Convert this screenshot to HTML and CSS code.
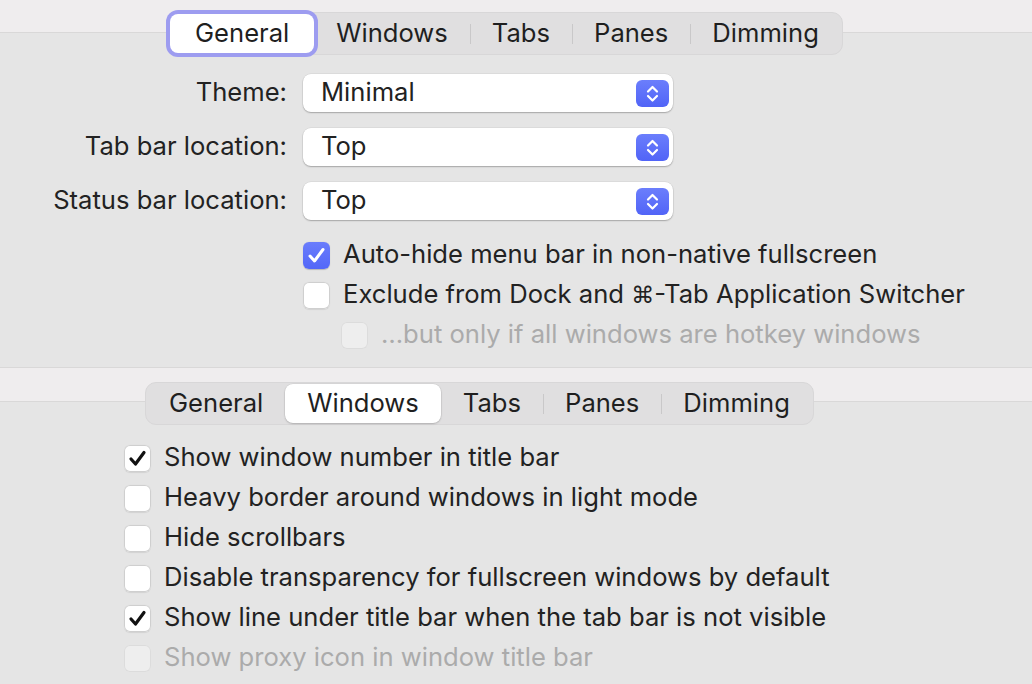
FILE: index.html
```html
<!DOCTYPE html>
<html>
<head>
<meta charset="utf-8">
<link rel="stylesheet" href="styles.css">
</head>
<body>
<div class="page">
  <section class="panel">
    <div class="band"></div>
    <div class="seg seg-top">
      <div class="seg-item selected focus">General</div>
      <div class="seg-item">Windows</div>
      <div class="seg-item sep">Tabs</div>
      <div class="seg-item sep">Panes</div>
      <div class="seg-item sep">Dimming</div>
    </div>
    <div class="form">
      <div class="label">Theme:</div>
      <div class="popup"><span class="val">Minimal</span><svg class="stepper" width="33" height="27" viewBox="0 0 33 27"><defs><linearGradient id="g1" x1="0" y1="0" x2="0" y2="1"><stop offset="0" stop-color="#6b7efc"/><stop offset="1" stop-color="#5164f7"/></linearGradient></defs><rect width="33" height="27" rx="6" fill="url(#g1)"/><path d="M12 11.5 L16.5 7 L21 11.5 M12 16 L16.5 20.5 L21 16" fill="none" stroke="#fff" stroke-width="2.2" stroke-linecap="round" stroke-linejoin="round"/></svg></div>
      <div class="label">Tab bar location:</div>
      <div class="popup"><span class="val">Top</span><svg class="stepper" width="33" height="27" viewBox="0 0 33 27"><rect width="33" height="27" rx="6" fill="url(#g1)"/><path d="M12 11.5 L16.5 7 L21 11.5 M12 16 L16.5 20.5 L21 16" fill="none" stroke="#fff" stroke-width="2.2" stroke-linecap="round" stroke-linejoin="round"/></svg></div>
      <div class="label">Status bar location:</div>
      <div class="popup"><span class="val">Top</span><svg class="stepper" width="33" height="27" viewBox="0 0 33 27"><rect width="33" height="27" rx="6" fill="url(#g1)"/><path d="M12 11.5 L16.5 7 L21 11.5 M12 16 L16.5 20.5 L21 16" fill="none" stroke="#fff" stroke-width="2.2" stroke-linecap="round" stroke-linejoin="round"/></svg></div>
    </div>
    <div class="checks checks-top">
      <div class="check-row">
        <span class="box box-blue"><svg width="27" height="27" viewBox="0 0 27 27"><path d="M7 14 L11.5 19 L20 7.5" fill="none" stroke="#fff" stroke-width="3" stroke-linecap="round" stroke-linejoin="round"/></svg></span>
        <span class="txt">Auto-hide menu bar in non-native fullscreen</span>
      </div>
      <div class="check-row">
        <span class="box"></span>
        <span class="txt">Exclude from Dock and <span class="cmd">⌘</span>-Tab Application Switcher</span>
      </div>
      <div class="check-row indent disabled">
        <span class="box"></span>
        <span class="txt">…but only if all windows are hotkey windows</span>
      </div>
    </div>
  </section>

  <section class="panel">
    <div class="band band2"></div>
    <div class="seg seg-bottom">
      <div class="seg-item">General</div>
      <div class="seg-item selected">Windows</div>
      <div class="seg-item">Tabs</div>
      <div class="seg-item sep">Panes</div>
      <div class="seg-item sep">Dimming</div>
    </div>
    <div class="checks checks-bottom">
      <div class="check-row">
        <span class="box"><svg width="27" height="27" viewBox="0 0 27 27"><path d="M7 14 L11.5 19 L20 7.5" fill="none" stroke="#111" stroke-width="3.2" stroke-linecap="round" stroke-linejoin="round"/></svg></span>
        <span class="txt">Show window number in title bar</span>
      </div>
      <div class="check-row">
        <span class="box"></span>
        <span class="txt">Heavy border around windows in light mode</span>
      </div>
      <div class="check-row">
        <span class="box"></span>
        <span class="txt">Hide scrollbars</span>
      </div>
      <div class="check-row">
        <span class="box"></span>
        <span class="txt">Disable transparency for fullscreen windows by default</span>
      </div>
      <div class="check-row">
        <span class="box"><svg width="27" height="27" viewBox="0 0 27 27"><path d="M7 14 L11.5 19 L20 7.5" fill="none" stroke="#111" stroke-width="3.2" stroke-linecap="round" stroke-linejoin="round"/></svg></span>
        <span class="txt">Show line under title bar when the tab bar is not visible</span>
      </div>
      <div class="check-row disabled">
        <span class="box"></span>
        <span class="txt">Show proxy icon in window title bar</span>
      </div>
    </div>
  </section>
</div>
</body>
</html>
```

FILE: styles.css
```css
* { box-sizing: border-box; }
html, body {
  margin: 0;
  padding: 0;
}
body {
  width: 1032px;
  height: 684px;
  overflow: hidden;
  background: #e5e5e5;
  font-family: Inter, "Liberation Sans", "DejaVu Sans", sans-serif;
  font-size: 25.6px;
  color: #222;
}
.page {
  display: flex;
  flex-direction: column;
}
.panel {
  display: flex;
  flex-direction: column;
}
.band {
  height: 33px;
  background: #efedee;
  border-bottom: 1px solid #d9d8d8;
}
.band2 {
  height: 35px;
  border-top: 1px solid #d9d8d8;
}
.seg {
  display: inline-flex;
  align-self: flex-start;
  padding: 1px;
  background: #e0dfe0;
  border: 1px solid #d8d7d8;
  border-radius: 11px;
  height: 43px;
}
.seg-top {
  margin: -21px 0 0 168px;
}
.seg-bottom {
  margin: -20px 0 0 145px;
}
.seg-item {
  position: relative;
  height: 39px;
  display: flex;
  align-items: center;
  padding: 0 22px 2px;
  border-radius: 8px;
  color: #1f1f1f;
}
.seg-item.sep::before {
  content: "";
  position: absolute;
  left: 0;
  top: 10px;
  height: 20px;
  border-left: 1px solid #c9c8c9;
}
.seg-item.selected {
  background: #fff;
  box-shadow: 0 1px 2px rgba(0,0,0,0.18), 0 0 0 0.5px rgba(0,0,0,0.08);
  padding: 0 22px 2px;
}
.seg-item.focus {
  box-shadow: 0 0 0 4px #9d9cf0;
  padding: 0 25px 2px;
}
.form {
  display: grid;
  grid-template-columns: 287px 370px;
  column-gap: 16px;
  row-gap: 16px;
  margin-top: 19px;
  align-items: center;
}
.label {
  text-align: right;
  padding-bottom: 3px;
}
.popup {
  height: 38px;
  background: #fff;
  border-radius: 8px;
  box-shadow: 0 1px 1.5px rgba(0,0,0,0.25), 0 0 0 0.5px rgba(0,0,0,0.08);
  display: flex;
  align-items: center;
  justify-content: space-between;
  padding: 0 4px 0 18px;
}
.val {
  padding-bottom: 3px;
}
.stepper {
  display: block;
}
.checks {
  display: flex;
  flex-direction: column;
}
.checks-top {
  margin: 15px 0 12px 303px;
}
.checks-bottom {
  margin: 13px 0 0 124px;
}
.check-row {
  height: 40px;
  display: flex;
  align-items: center;
  gap: 13px;
}
.check-row.indent {
  margin-left: 38px;
}
.txt {
  padding-bottom: 3px;
}
.box {
  width: 27px;
  height: 27px;
  flex: none;
  border-radius: 6px;
  background: #fff;
  box-shadow: inset 0 0 0 1px #cfcfcf, 0 0.5px 1px rgba(0,0,0,0.08);
  display: flex;
}
.box svg { display: block; }
.box-blue {
  background: linear-gradient(#6a7dfc, #5367f8);
  box-shadow: 0 0.5px 1px rgba(0,0,0,0.2);
}
.disabled .box {
  background: #eeeeee;
  box-shadow: inset 0 0 0 1px #dcdcdc;
}
.disabled .txt {
  color: #ababab;
}
.cmd {
  font-family: "DejaVu Sans", sans-serif;
  font-size: 23px;
}
```
